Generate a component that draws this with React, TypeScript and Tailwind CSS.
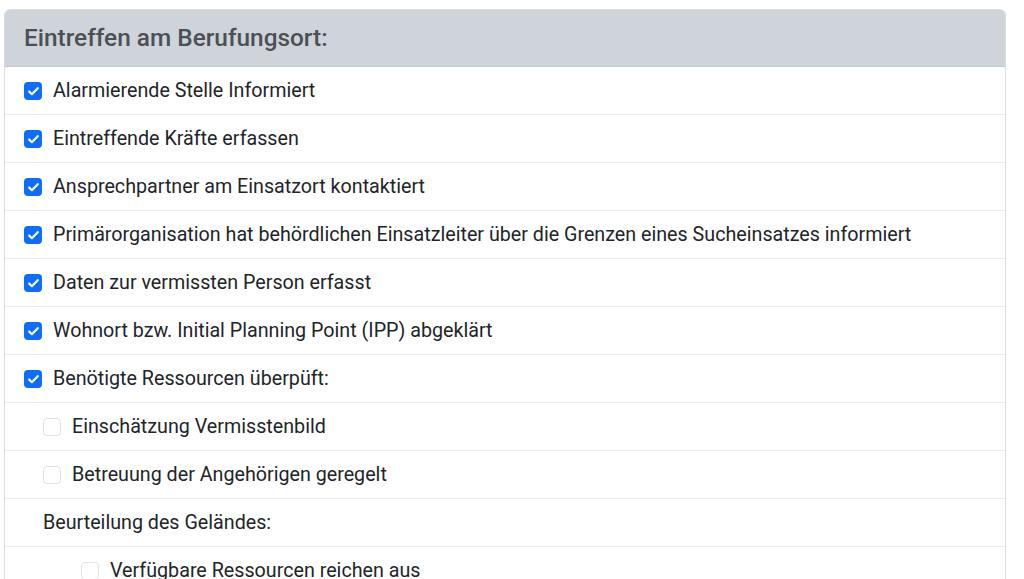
import { Check } from "lucide-react";

type Item = { label: string; level: number; checked?: boolean; box?: boolean };

const items: Item[] = [
  { label: "Alarmierende Stelle Informiert", level: 0, checked: true, box: true },
  { label: "Eintreffende Kräfte erfassen", level: 0, checked: true, box: true },
  { label: "Ansprechpartner am Einsatzort kontaktiert", level: 0, checked: true, box: true },
  { label: "Primärorganisation hat behördlichen Einsatzleiter über die Grenzen eines Sucheinsatzes informiert", level: 0, checked: true, box: true },
  { label: "Daten zur vermissten Person erfasst", level: 0, checked: true, box: true },
  { label: "Wohnort bzw. Initial Planning Point (IPP) abgeklärt", level: 0, checked: true, box: true },
  { label: "Benötigte Ressourcen überpüft:", level: 0, checked: true, box: true },
  { label: "Einschätzung Vermisstenbild", level: 1, box: true },
  { label: "Betreuung der Angehörigen geregelt", level: 1, box: true },
  { label: "Beurteilung des Geländes:", level: 1, box: false },
  { label: "Verfügbare Ressourcen reichen aus", level: 2, box: true },
];

const indent = ["pl-[19px]", "pl-[38px]", "pl-[76px]"];

function Box({ checked }: { checked?: boolean }) {
  if (checked) {
    return (
      <span className="flex h-[18px] w-[18px] shrink-0 items-center justify-center rounded-[4px] bg-[#0d6efd]">
        <Check size={13} strokeWidth={4} color="white" />
      </span>
    );
  }
  return <span className="h-[18px] w-[18px] shrink-0 rounded-[4px] border border-[#dee2e6] bg-white" />;
}

export default function App() {
  return (
    <div className="min-h-[579px] bg-white pl-[4px] pr-[18px] pt-[9px] font-['Roboto',sans-serif] text-[#212529]">
      <div className="overflow-hidden rounded-t-[6px] border border-[#d9dde2]">
        <div className="flex h-[57px] items-center border-b border-[#c4c9cf] bg-[#cfd4da] px-[19px]">
          <h2 className="text-[24.4px] font-medium text-[#4b5057]">Eintreffen am Berufungsort:</h2>
        </div>
        {items.map((item, i) => (
          <div
            key={i}
            className={`flex h-[48px] items-center gap-[11px] border-b border-[#e9ecef] pt-[1px] text-[19.7px] ${indent[item.level]}`}
          >
            {item.box && <Box checked={item.checked} />}
            <span>{item.label}</span>
          </div>
        ))}
      </div>
    </div>
  );
}
